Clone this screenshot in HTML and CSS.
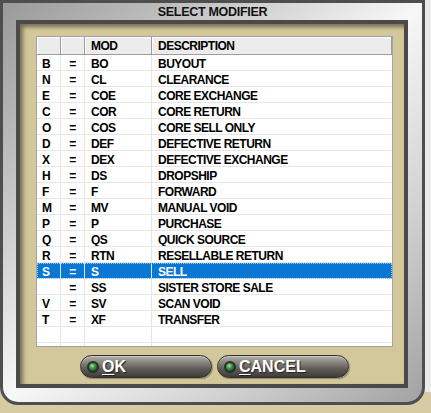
FILE: index.html
```html
<!DOCTYPE html>
<html>
<head>
<meta charset="utf-8">
<title>Select Modifier</title>
<link rel="stylesheet" href="styles.css">
</head>
<body>
<div class="window">
  <div class="title">SELECT MODIFIER</div>
  <div class="panel">
    <div class="table">
      <div class="row head"><div class="c"></div><div class="c"></div><div class="c">MOD</div><div class="c">DESCRIPTION</div></div>
      <div class="row"><div class="c">B</div><div class="c eq">=</div><div class="c">BO</div><div class="c">BUYOUT</div></div>
      <div class="row"><div class="c">N</div><div class="c eq">=</div><div class="c">CL</div><div class="c">CLEARANCE</div></div>
      <div class="row"><div class="c">E</div><div class="c eq">=</div><div class="c">COE</div><div class="c">CORE EXCHANGE</div></div>
      <div class="row"><div class="c">C</div><div class="c eq">=</div><div class="c">COR</div><div class="c">CORE RETURN</div></div>
      <div class="row"><div class="c">O</div><div class="c eq">=</div><div class="c">COS</div><div class="c">CORE SELL ONLY</div></div>
      <div class="row"><div class="c">D</div><div class="c eq">=</div><div class="c">DEF</div><div class="c">DEFECTIVE RETURN</div></div>
      <div class="row"><div class="c">X</div><div class="c eq">=</div><div class="c">DEX</div><div class="c">DEFECTIVE EXCHANGE</div></div>
      <div class="row"><div class="c">H</div><div class="c eq">=</div><div class="c">DS</div><div class="c">DROPSHIP</div></div>
      <div class="row"><div class="c">F</div><div class="c eq">=</div><div class="c">F</div><div class="c">FORWARD</div></div>
      <div class="row"><div class="c">M</div><div class="c eq">=</div><div class="c">MV</div><div class="c">MANUAL VOID</div></div>
      <div class="row"><div class="c">P</div><div class="c eq">=</div><div class="c">P</div><div class="c">PURCHASE</div></div>
      <div class="row"><div class="c">Q</div><div class="c eq">=</div><div class="c">QS</div><div class="c">QUICK SOURCE</div></div>
      <div class="row"><div class="c">R</div><div class="c eq">=</div><div class="c">RTN</div><div class="c">RESELLABLE RETURN</div></div>
      <div class="row selected"><div class="c">S</div><div class="c eq">=</div><div class="c">S</div><div class="c">SELL</div></div>
      <div class="row"><div class="c"></div><div class="c eq">=</div><div class="c">SS</div><div class="c">SISTER STORE SALE</div></div>
      <div class="row"><div class="c">V</div><div class="c eq">=</div><div class="c">SV</div><div class="c">SCAN VOID</div></div>
      <div class="row"><div class="c">T</div><div class="c eq">=</div><div class="c">XF</div><div class="c">TRANSFER</div></div>
      <div class="row"><div class="c"></div><div class="c"></div><div class="c"></div><div class="c"></div></div>
      <div class="row filler"><div class="c"></div><div class="c"></div><div class="c"></div><div class="c"></div></div>
    </div>
    <div class="buttons">
      <button class="btn"><span class="led"></span><span class="lbl"><u>O</u>K</span></button>
      <button class="btn"><span class="led"></span><span class="lbl"><u>C</u>ANCEL</span></button>
    </div>
  </div>
</div>
</body>
</html>
```

FILE: styles.css
```css
html, body {
  margin: 0;
  padding: 0;
}
body {
  width: 431px;
  height: 413px;
  overflow: hidden;
  background: linear-gradient(to bottom, #e9e9e9 0, #e9e9e9 392px, #d6cba3 392px);
  font-family: "Liberation Sans", Arial, sans-serif;
}
.window {
  box-sizing: border-box;
  width: 425px;
  height: 405px;
  border: 3px solid #4e4e4e;
  border-radius: 0 0 18px 18px;
  background: linear-gradient(to bottom right, #9a9a9a 0%, #cfcfcf 30%, #f7f7f7 50%, #d2d2d2 75%, #a2a2a2 100%);
  display: flex;
  flex-direction: column;
}
.title {
  height: 17px;
  line-height: 19px;
  text-align: center;
  font-weight: bold;
  font-size: 12.5px;
  letter-spacing: -0.3px;
  color: #111;
}
.panel {
  box-sizing: border-box;
  height: 368px;
  margin: 0 14px 0 13px;
  border: 4px solid #4a4a4a;
  background: #d3c79c;
  box-shadow: inset 3px 3px 4px rgba(0, 0, 0, 0.45);
  padding: 12px 11px 0 16px;
  display: flex;
  flex-direction: column;
}
.table {
  box-sizing: border-box;
  height: 311px;
  border: 1px solid #a3a3a3;
  background: #fff;
  display: flex;
  flex-direction: column;
}
.row {
  display: grid;
  grid-template-columns: 24px 24px 67px 1fr;
  height: 16px;
  box-sizing: border-box;
  border-bottom: 1px solid #e6e6e6;
  font-size: 12px;
  font-weight: bold;
  letter-spacing: -0.5px;
  line-height: 15px;
  color: #000;
  flex: none;
}
.c {
  box-sizing: border-box;
  border-right: 1px solid #e6e6e6;
  padding: 2px 0 0 6px;
  white-space: nowrap;
  overflow: hidden;
}
.row .c:first-child {
  padding-left: 5px;
}
.row .c:last-child {
  border-right: none;
}
.c.eq {
  padding-left: 0;
  text-align: center;
}
.row.head {
  height: 18px;
  border-bottom: none;
  line-height: 16px;
}
.row.head .c {
  padding-top: 1px;
  background: #ececec;
  border-right: 1px solid #9d9d9d;
  border-bottom: 1px solid #9d9d9d;
  box-shadow: inset 1px 1px 0 #fff;
}
.row.head .c:last-child {
  border-right: 1px solid #9d9d9d;
}
.row.selected {
  background: #0a77d5;
  color: #fff;
  outline: 1px dotted #9cc9f0;
  outline-offset: -1px;
}
.row.selected .c {
  border-right-color: #d8e8f6;
}
.row.filler {
  flex: 1;
  border-bottom: none;
}
.buttons {
  display: flex;
  justify-content: center;
  gap: 5px;
  margin-top: 8px;
}
.btn {
  box-sizing: border-box;
  width: 132px;
  height: 23px;
  border-radius: 12px;
  border: 1px solid #33312e;
  background: linear-gradient(to bottom, #b4b0aa 0%, #8d8984 28%, #605d59 60%, #3e3c39 100%);
  box-shadow: inset 0 1px 0 rgba(255, 255, 255, 0.35), 1px 1px 1px rgba(0, 0, 0, 0.3);
  display: flex;
  align-items: center;
  gap: 3px;
  padding: 0 0 0 6px;
  margin: 0;
  font-family: "Liberation Sans", Arial, sans-serif;
  font-weight: bold;
  font-size: 16px;
  color: #fff;
  text-shadow: 1px 1px 1px #222;
}
.led {
  box-sizing: border-box;
  width: 12px;
  height: 12px;
  border-radius: 50%;
  border: 2px solid #2c2c2c;
  background: radial-gradient(circle at 40% 35%, #a5e8a5 0, #3f9f46 35%, #1b5a22 75%);
  flex: none;
}
.lbl {
  line-height: 18px;
}
.lbl u {
  text-decoration-thickness: 1px;
  text-underline-offset: 2px;
}
```
